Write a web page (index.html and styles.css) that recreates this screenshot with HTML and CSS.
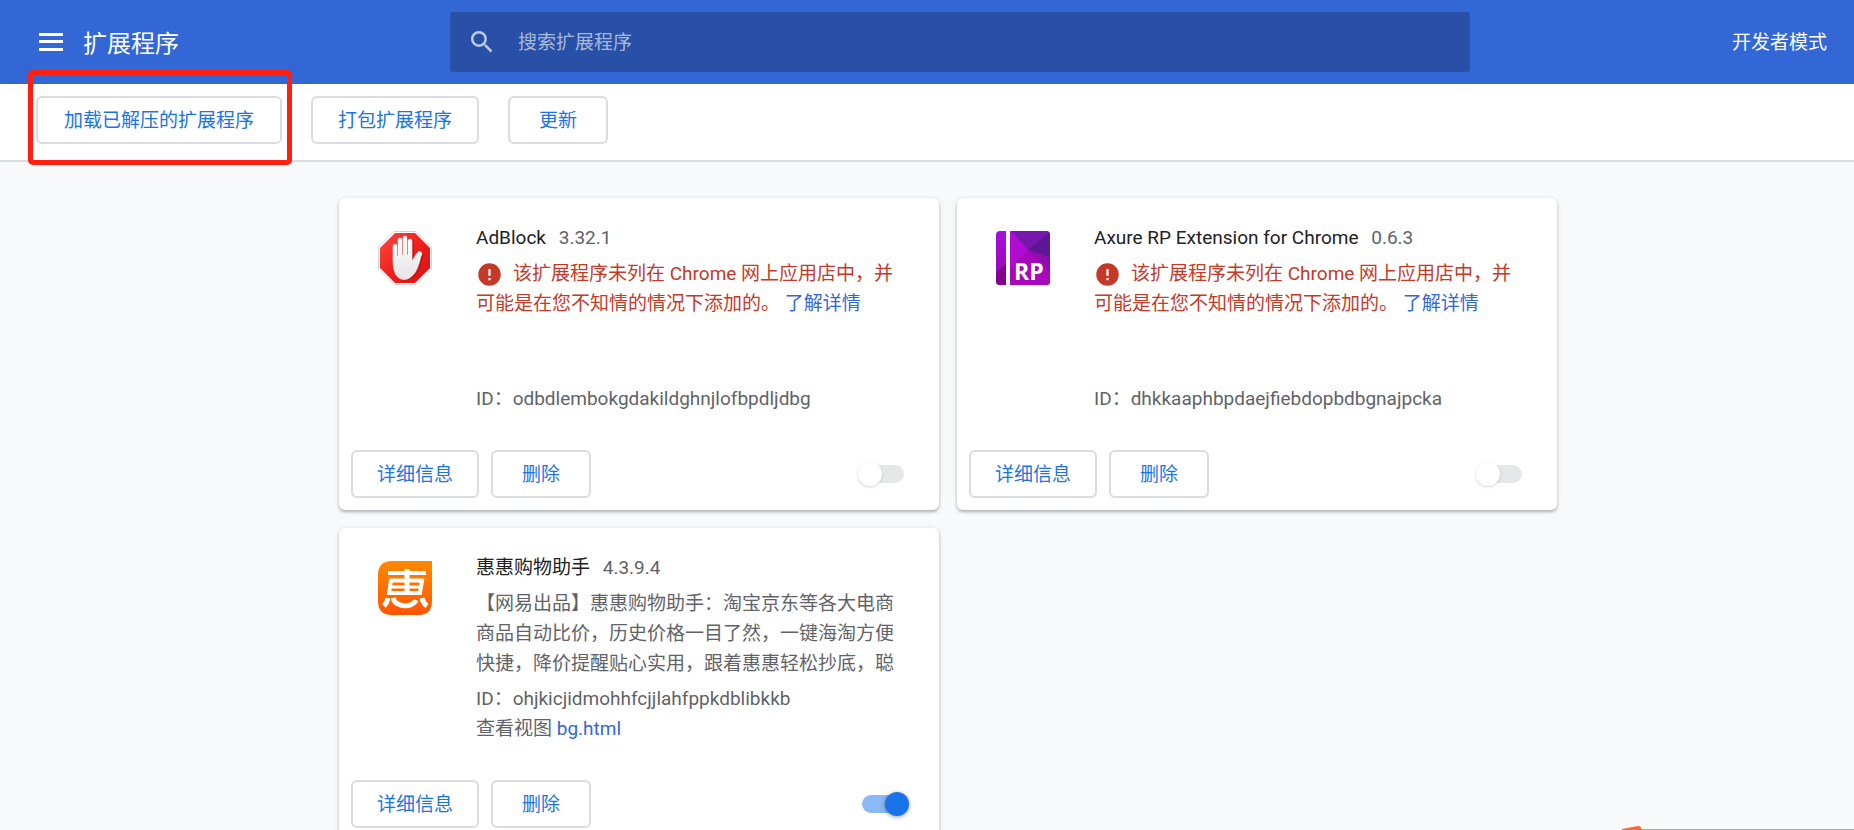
FILE: index.html
```html
<!DOCTYPE html>
<html lang="zh-CN">
<head>
<meta charset="utf-8">
<title>扩展程序</title>
<link rel="stylesheet" href="styles.css">
</head>
<body>
<svg class="defs" aria-hidden="true">
  <symbol id="error" viewBox="0 0 24 24"><path d="M12 2a10 10 0 1 0 0 20 10 10 0 0 0 0-20zm1 15h-2v-2h2zm0-4h-2V7h2z" fill="currentColor"/></symbol>
</svg>
<header class="topbar">
  <div class="brand">
    <button class="menu" type="button" aria-label="主菜单">
      <svg viewBox="0 0 24 18" width="24" height="18"><path d="M0 0h24v3H0zM0 7h24v3H0zM0 15h24v3H0z" fill="#fff"/></svg>
    </button>
    <h1 class="title">扩展程序</h1>
  </div>
  <label class="search">
    <svg viewBox="3 3 18 18" width="22" height="22"><path d="M15.5 14h-.79l-.28-.27A6.47 6.47 0 0 0 16 9.500 6.500 6.500 0 1 0 9.500 16c1.610 0 3.090-.590 4.230-1.570l.270.280v.790l5 4.990L20.490 19l-4.990-5zm-6 0a4.500 4.500 0 1 1 0-9 4.500 4.500 0 0 1 0 9z" fill="#bfcbe5"/></svg>
    <input class="search-input" type="search" placeholder="搜索扩展程序" aria-label="搜索扩展程序">
  </label>
  <span class="dev-mode">开发者模式</span>
</header>
<div class="toolbar">
  <div class="marked"><button class="btn" type="button">加载已解压的扩展程序</button></div>
  <button class="btn" type="button">打包扩展程序</button>
  <button class="btn" type="button">更新</button>
</div>
<main class="content">
  <div class="cards">
    <article class="card">
      <div class="info">
        <svg class="logo" viewBox="0 0 54 54">
          <defs><linearGradient id="red" x1="0" y1="0" x2="1" y2="1"><stop offset="0" stop-color="#fb4a42"/><stop offset=".5" stop-color="#ee201c"/><stop offset="1" stop-color="#d90f10"/></linearGradient>
          <linearGradient id="hand" x1="0" y1="0" x2="0" y2="1"><stop offset="0" stop-color="#fff"/><stop offset="1" stop-color="#e4e4e4"/></linearGradient></defs>
          <path d="M16 .5h22L53.500 16v22L38 53.500H16L.5 38V16z" fill="#fff" stroke="#d4d4d4"/>
          <path d="M17 2h20l15 15v20L37 52H17L2 37V17z" fill="url(#red)"/>
          <path d="M17 42c-2-5-2-10-2-16V15q0-2 2-2t2 2v10h1V9q0-2 2-2t2 2v15h1V7q0-2 2-2t2 2v17h1V10q0-2 2-2t2 2v20l5-8q2-3 4-1t0 4c-2 8-4 16-9 20-6 6-14 4-17-3z" transform="translate(2 1)" fill="#940707" opacity=".4"/>
          <path d="M17 42c-2-5-2-10-2-16V15q0-2 2-2t2 2v10h1V9q0-2 2-2t2 2v15h1V7q0-2 2-2t2 2v17h1V10q0-2 2-2t2 2v20l5-8q2-3 4-1t0 4c-2 8-4 16-9 20-6 6-14 4-17-3z" fill="url(#hand)" stroke="#f4f4f4" stroke-width=".6"/>
        </svg>
        <div class="details">
          <h2 class="name">AdBlock <span class="version">3.32.1</span></h2>
          <p class="desc warning"><svg class="warn-icon"><use href="#error"/></svg>该扩展程序未列在 Chrome 网上应用店中，并可能是在您不知情的情况下添加的。 <a href="#">了解详情</a></p>
          <p class="meta">ID：odbdlembokgdakildghnjlofbpdljdbg</p>
        </div>
      </div>
      <div class="actions">
        <button class="btn" type="button">详细信息</button>
        <button class="btn" type="button">删除</button>
        <input class="toggle" type="checkbox" role="switch" aria-label="AdBlock">
      </div>
    </article>
    <article class="card">
      <div class="info">
        <svg class="logo" viewBox="0 0 54 54">
          <defs><clipPath id="round"><rect width="54" height="54" rx="4"/></clipPath>
          <linearGradient id="vio" x1="0" y1="0" x2="0" y2="1"><stop offset="0" stop-color="#a410dc"/><stop offset="1" stop-color="#9b06a8"/></linearGradient></defs>
          <g clip-path="url(#round)">
            <rect width="54" height="54" fill="url(#vio)"/>
            <path d="M14 0l18 19L14 37z" fill="#b412e4"/>
            <path d="M14 0l18 19 22 10v25H14V37z" fill="#b00cd0"/>
            <path d="M14 37l18-18 22 18v17H14z" fill="#a808bc"/>
            <path d="M32 19L54 0v28z" fill="#5d1796"/>
            <path d="M16 0h38L32 19z" fill="#7817ae"/>
            <path d="M32 19l22 7v14z" fill="#8c0cae"/>
            <path d="M0 42l10-9v21H0z" fill="#83008f"/>
            <path d="M10 0h4v54h-4z" fill="#fff"/>
          </g>
          <text class="rp" x="18" y="49">RP</text>
        </svg>
        <div class="details">
          <h2 class="name">Axure RP Extension for Chrome <span class="version">0.6.3</span></h2>
          <p class="desc warning"><svg class="warn-icon"><use href="#error"/></svg>该扩展程序未列在 Chrome 网上应用店中，并可能是在您不知情的情况下添加的。 <a href="#">了解详情</a></p>
          <p class="meta">ID：dhkkaaphbpdaejfiebdopbdbgnajpcka</p>
        </div>
      </div>
      <div class="actions">
        <button class="btn" type="button">详细信息</button>
        <button class="btn" type="button">删除</button>
        <input class="toggle" type="checkbox" role="switch" aria-label="Axure RP Extension for Chrome">
      </div>
    </article>
    <article class="card">
      <div class="info">
        <svg class="logo" viewBox="0 0 54 54">
          <defs><linearGradient id="org" x1="0" y1="0" x2="0" y2="1"><stop offset="0" stop-color="#ff8a00"/><stop offset="1" stop-color="#ff5500"/></linearGradient></defs>
          <path d="M14 0h40v40q0 14-14 14H14Q0 54 0 40V14Q0 0 14 0z" fill="url(#org)"/>
          <g fill="none" stroke="#fff">
            <path d="M10 12h38" stroke-width="4"/>
            <path d="M29 8v24" stroke-width="5"/>
            <path d="M13 19.500h31l-2 12.500H11z" stroke-width="4"/>
            <path d="M13 26h30" stroke-width="3"/>
            <path d="M10 37q-1 5-4 8" stroke-width="5"/>
            <path d="M15 37c3 10 20 10 23 2" stroke-width="5"/>
            <path d="M44 37q1 5 5 8" stroke-width="5"/>
          </g>
        </svg>
        <div class="details">
          <h2 class="name">惠惠购物助手 <span class="version">4.3.9.4</span></h2>
          <p class="desc">【网易出品】惠惠购物助手：淘宝京东等各大电商商品自动比价，历史价格一目了然，一键海淘方便快捷，降价提醒贴心实用，跟着惠惠轻松抄底，聪</p>
          <p class="meta">ID：ohjkicjidmohhfcjjlahfppkdblibkkb</p>
          <p class="meta">查看视图 <a href="#">bg.html</a></p>
        </div>
      </div>
      <div class="actions">
        <button class="btn" type="button">详细信息</button>
        <button class="btn" type="button">删除</button>
        <input class="toggle" type="checkbox" role="switch" aria-label="惠惠购物助手" checked>
      </div>
    </article>
  </div>
</main>
<svg class="corner" viewBox="0 0 232 4" width="232" height="4" aria-hidden="true"><path d="M19 3h213v1H19z" fill="#a9acb0"/><path d="M0 3L16 0q3 0 4 4H0z" fill="#fd6a33"/></svg>
</body>
</html>
```
FILE: styles.css
```css
* { box-sizing: border-box; }

body {
  margin: 0;
  height: 100vh;
  display: flex;
  flex-direction: column;
  overflow: hidden;
  background: #f8f9fa;
  color: #5f6368;
  font: 19px/30px Roboto, "Noto Sans CJK SC", sans-serif;
}

h1, h2, p { margin: 0; font-weight: 400; }
a { color: #3367d6; text-decoration: none; }
button, input { font: inherit; }
.defs { display: none; }

.topbar {
  display: grid;
  grid-template-columns: 450px minmax(0, 1020px) 1fr;
  align-items: center;
  height: 84px;
  flex: none;
  background: #3367d6;
  color: #fff;
}
.brand {
  display: flex;
  align-items: center;
  gap: 20px;
  padding-left: 39px;
}
.menu {
  display: flex;
  padding: 0;
  border: 0;
  background: none;
}
.title { padding-top: 3px; font-size: 24px; line-height: 36px; }
.search {
  display: flex;
  align-items: center;
  gap: 25px;
  height: 60px;
  padding-left: 21px;
  border-radius: 3px;
  background: #2850a7;
}
.search-input {
  flex: 1;
  padding: 2px 0 0;
  border: 0;
  outline: 0;
  background: none;
  color: #fff;
}
.search-input::placeholder { color: #a9b9dc; opacity: 1; }
.dev-mode { justify-self: end; padding: 2px 27px 0 0; }

.toolbar {
  display: flex;
  align-items: flex-start;
  gap: 29px;
  flex: none;
  height: 78px;
  padding: 12px 36px;
  border-bottom: 2px solid #dadce0;
  background: #fff;
}
.btn {
  height: 48px;
  min-width: 100px;
  padding: 2px 25px 0;
  border: 2px solid #dadce0;
  border-radius: 6px;
  background: #fff;
  color: #1a73e8;
  white-space: nowrap;
}
.marked { position: relative; }
.marked .btn { padding: 2px 26px 0; }
.marked::after {
  content: "";
  position: absolute;
  inset: -26px -10px -21px -8px;
  border: 5px solid #ff1f10;
  border-radius: 5px;
  pointer-events: none;
}

.content { flex: 1; min-height: 0; overflow: hidden; }
.cards {
  display: grid;
  grid-template-columns: repeat(auto-fill, 600px);
  gap: 18px;
  max-width: 1260px;
  margin: 0 auto;
  padding: 36px 0 36px 42px;
}
.card {
  display: flex;
  flex-direction: column;
  min-height: 312px;
  border-radius: 6px;
  background: #fff;
  box-shadow: 0 2px 3px rgba(60, 64, 67, .3), 0 1px 5px rgba(60, 64, 67, .15);
}
.info {
  display: flex;
  gap: 44px;
  flex: 1;
  padding: 25px 30px 0 39px;
}
.logo { flex: none; width: 54px; height: 54px; margin-top: 8px; }
.rp { fill: #fff; font: 700 23px "Open Sans", sans-serif; }
.details { flex: 1; display: flex; flex-direction: column; }
.name { color: #202124; font-size: 19px; }
.version { margin-left: 8px; color: #5f6368; }
.desc { flex: 1; margin: 6px 0 5px; }
.warning { color: #c53929; }
.warn-icon {
  width: 27px;
  height: 27px;
  margin: -2px 10px -2px 0;
  vertical-align: middle;
}
.actions {
  display: flex;
  align-items: center;
  gap: 12px;
  padding: 36px 35px 12px 12px;
}
.actions .btn { padding: 2px 24px 0; }

.toggle {
  appearance: none;
  position: relative;
  width: 42px;
  height: 18px;
  margin: 0 0 0 auto;
  border-radius: 9px;
  background: #e6e7e9;
}
.toggle::before {
  content: "";
  position: absolute;
  top: -3px;
  left: -4px;
  width: 24px;
  height: 24px;
  border-radius: 50%;
  background: #fff;
  box-shadow: 0 1px 3px rgba(0, 0, 0, .18);
}
.toggle:checked { background: #8cb9f4; }
.toggle:checked::before {
  left: 23px;
  background: #1a73e8;
  box-shadow: 0 1px 4px rgba(0, 0, 0, .4);
}

.corner { position: fixed; right: 0; bottom: 0; }
```
